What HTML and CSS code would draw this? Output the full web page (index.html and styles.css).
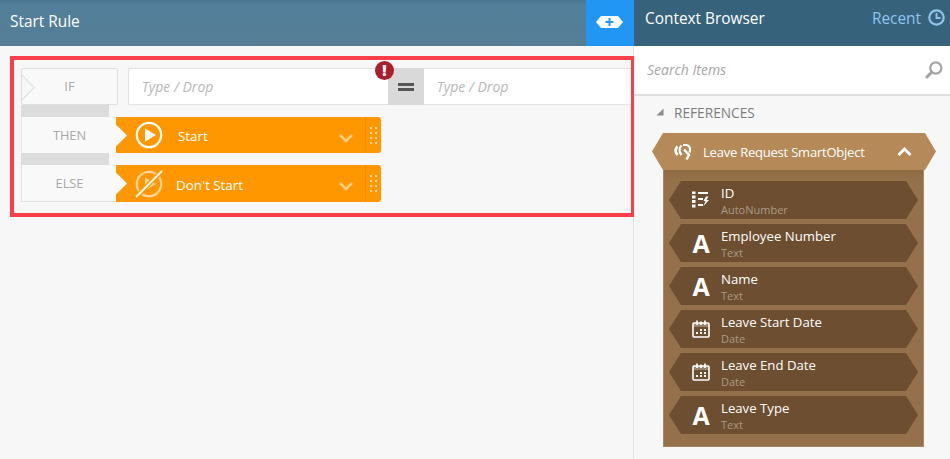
FILE: index.html
```html
<!DOCTYPE html>
<html lang="en">
<head>
<meta charset="utf-8">
<title>Start Rule</title>
<link rel="stylesheet" href="styles.css">
</head>
<body>
<div class="app">
  <main class="main">
    <header class="main-head">
      <h1 class="title">Start Rule</h1>
      <button class="add-btn" type="button" aria-label="Add">
        <svg width="27" height="12" viewBox="0 0 27 12"><path d="M5 0H22L27 6L22 12H5L0 6Z" fill="#fff"/><path d="M13.500 2V10M9.500 6H17.500" stroke="#2196f3" stroke-width="2"/></svg>
      </button>
    </header>
    <section class="canvas">
      <div class="rule-box">
        <div class="row if-row">
          <div class="label label-if">IF</div>
          <div class="expr">
            <div class="field field-left">Type / Drop</div>
            <div class="equals"><span class="equals-bars"></span></div>
            <div class="field field-right">Type / Drop</div>
            <span class="error-badge">!</span>
          </div>
        </div>
        <div class="connector"></div>
        <div class="row then-row">
          <div class="label label-then">THEN</div>
          <div class="action">
            <svg class="action-icon" width="28" height="28" viewBox="0 0 28 28"><circle cx="14" cy="14" r="12.200" fill="none" stroke="#fff" stroke-width="2.200"/><path d="M10 7.500L21 14L10 20.500Z" fill="#fff"/></svg>
            <span class="action-text action-start">Start</span>
            <svg class="chevron" width="16" height="10" viewBox="0 0 16 10"><path d="M2 2L8 8L14 2" fill="none" stroke="#fff" stroke-opacity=".5" stroke-width="2.600"/></svg>
            <span class="grip"><svg width="7" height="17" viewBox="0 0 7 17"><g fill="#ffd9a0"><rect width="2" height="2"/><rect x="5" width="2" height="2"/><rect y="5" width="2" height="2"/><rect x="5" y="5" width="2" height="2"/><rect y="10" width="2" height="2"/><rect x="5" y="10" width="2" height="2"/><rect y="15" width="2" height="2"/><rect x="5" y="15" width="2" height="2"/></g></svg></span>
          </div>
        </div>
        <div class="connector"></div>
        <div class="row else-row">
          <div class="label label-else">ELSE</div>
          <div class="action">
            <svg class="action-icon" width="28" height="28" viewBox="0 0 28 28"><g opacity=".6"><circle cx="14" cy="14" r="12.200" fill="none" stroke="#fff" stroke-width="2.200"/><path d="M10 7.500L21 14L10 20.500Z" fill="#fff"/></g><path d="M1 27L27 1" stroke="#ff9800" stroke-width="4.500"/><path d="M1 27L27 1" stroke="#fff" stroke-width="1.800"/></svg>
            <span class="action-text action-stop">Don't Start</span>
            <svg class="chevron" width="16" height="10" viewBox="0 0 16 10"><path d="M2 2L8 8L14 2" fill="none" stroke="#fff" stroke-opacity=".5" stroke-width="2.600"/></svg>
            <span class="grip"><svg width="7" height="17" viewBox="0 0 7 17"><g fill="#ffd9a0"><rect width="2" height="2"/><rect x="5" width="2" height="2"/><rect y="5" width="2" height="2"/><rect x="5" y="5" width="2" height="2"/><rect y="10" width="2" height="2"/><rect x="5" y="10" width="2" height="2"/><rect y="15" width="2" height="2"/><rect x="5" y="15" width="2" height="2"/></g></svg></span>
          </div>
        </div>
      </div>
    </section>
  </main>
  <aside class="side">
    <header class="side-head">
      <h2 class="side-title">Context Browser</h2>
      <div class="recent">
        <span class="recent-text">Recent</span>
        <svg width="17" height="17" viewBox="0 0 17 17"><circle cx="8.500" cy="8.500" r="7.200" fill="none" stroke="#8fc4ec" stroke-width="2.200"/><path d="M8.500 4V9H12.500" fill="none" stroke="#8fc4ec" stroke-width="1.800"/></svg>
      </div>
    </header>
    <div class="search">
      <span class="search-text">Search Items</span>
      <svg width="18" height="18" viewBox="0 0 18 18"><circle cx="10.800" cy="7" r="5.600" fill="none" stroke="#a3a3a3" stroke-width="2.200"/><path d="M6.800 11L2 16" stroke="#a3a3a3" stroke-width="3" stroke-linecap="round"/></svg>
    </div>
    <div class="refs">
      <div class="refs-head">
        <svg width="8" height="8" viewBox="0 0 8 8"><path d="M7.500 .5V7.500H.5Z" fill="#8a8a8a"/></svg>
        <span>REFERENCES</span>
      </div>
      <div class="tree">
        <div class="tree-head">
          <svg class="tree-icon" width="19" height="18" viewBox="0 0 19 18"><g fill="none" stroke="#fff"><path d="M3.500 3.500C1 6 1 9 3.500 12" stroke-width="2.600"/><path d="M7.500 2.500C5 5 5 9 7.500 12" stroke-width="2.400"/><path d="M9 2H12.500C16 2.500 17 6.500 15.500 9.500" stroke-width="2.200"/><path d="M10 6.500L15 12L12.500 16.500" stroke-width="2.400"/></g></svg>
          <span class="tree-title">Leave Request SmartObject</span>
          <svg width="15" height="10" viewBox="0 0 15 10"><path d="M1.500 8L7.500 2L13.500 8" fill="none" stroke="#fff" stroke-width="2.800"/></svg>
        </div>
        <ul class="tree-body">
          <li class="item">
            <span class="item-icon"><svg width="18" height="20" viewBox="0 0 18 20"><g fill="#fff"><rect x="0" y="1.500" width="3.500" height="2.500"/><rect x="0" y="5.500" width="3.500" height="3"/><rect x="0" y="10" width="3.500" height="3"/><rect x="0" y="14.500" width="3.500" height="3"/><rect x="6" y="2" width="10" height="2"/><rect x="6" y="8" width="5" height="2"/><rect x="6" y="14" width="5" height="2"/><path d="M14 6.500L11.500 11H13.500L11.500 16L17 10H14.500L16.500 6.500Z"/></g></svg></span>
            <span class="item-text"><span class="item-name">ID</span><span class="item-type">AutoNumber</span></span>
          </li>
          <li class="item">
            <span class="item-icon glyph">A</span>
            <span class="item-text"><span class="item-name">Employee Number</span><span class="item-type">Text</span></span>
          </li>
          <li class="item">
            <span class="item-icon glyph">A</span>
            <span class="item-text"><span class="item-name">Name</span><span class="item-type">Text</span></span>
          </li>
          <li class="item">
            <span class="item-icon"><svg width="18" height="18" viewBox="0 0 18 18"><rect x="1" y="3" width="16" height="14" rx="1" fill="none" stroke="#fff" stroke-width="1.600"/><path d="M1 3H17V7H1Z" fill="#fff" opacity=".3"/><path d="M5 .5V5M9 1.500V5M13 .5V5" stroke="#fff" stroke-width="1.700"/><g fill="#fff"><rect x="4" y="12" width="2" height="2"/><rect x="8" y="9" width="2" height="2"/><rect x="8" y="12" width="2" height="2"/><rect x="12" y="9" width="2" height="2"/><rect x="12" y="12" width="2" height="2"/></g></svg></span>
            <span class="item-text"><span class="item-name">Leave Start Date</span><span class="item-type">Date</span></span>
          </li>
          <li class="item">
            <span class="item-icon"><svg width="18" height="18" viewBox="0 0 18 18"><rect x="1" y="3" width="16" height="14" rx="1" fill="none" stroke="#fff" stroke-width="1.600"/><path d="M1 3H17V7H1Z" fill="#fff" opacity=".3"/><path d="M5 .5V5M9 1.500V5M13 .5V5" stroke="#fff" stroke-width="1.700"/><g fill="#fff"><rect x="4" y="12" width="2" height="2"/><rect x="8" y="9" width="2" height="2"/><rect x="8" y="12" width="2" height="2"/><rect x="12" y="9" width="2" height="2"/><rect x="12" y="12" width="2" height="2"/></g></svg></span>
            <span class="item-text"><span class="item-name">Leave End Date</span><span class="item-type">Date</span></span>
          </li>
          <li class="item">
            <span class="item-icon glyph">A</span>
            <span class="item-text"><span class="item-name">Leave Type</span><span class="item-type">Text</span></span>
          </li>
        </ul>
      </div>
    </div>
  </aside>
</div>
</body>
</html>
```
FILE: styles.css
```css
* { box-sizing: border-box; }
html, body { margin: 0; height: 100%; }
body { font-family: "Open Sans", "Liberation Sans", sans-serif; background: #f7f7f7; overflow: hidden; }
.app { display: flex; width: 950px; height: 459px; }

.main { width: 634px; display: flex; flex-direction: column; border-right: 1px solid #e2e2e2; }
.main-head { height: 46px; margin-right: -1px; display: flex; justify-content: space-between; background: linear-gradient(#4a7690, #537f9a 12%, #557e96); }
.title { margin: 0; padding: 12px 0 0 10px; font-size: 15.4px; line-height: 20px; font-weight: 400; color: #fff; }
.add-btn { width: 48px; height: 46px; padding: 0 1px 2px 0; border: 0; background: #2196f3; display: flex; align-items: center; justify-content: center; }

.canvas { flex: 1; padding: 10px 0 0 10px; }
.rule-box { width: 624px; height: 161px; border: 4px solid #fb3f4a; border-right-width: 3px; padding: 8px 0 0 7px; display: flex; flex-direction: column; }
.row { display: flex; }
.if-row { height: 37px; }
.then-row { height: 36px; }
.else-row { height: 37px; }
.connector { width: 88px; height: 12px; background: #dcdcdc; }

.label { width: 96px; display: flex; align-items: center; justify-content: center; font-size: 12.800px; color: #a8a8a8; background: #f9f9f9; }
.label-if { width: 97px; padding-bottom: 2px; border: 1px solid #dfdfdf; border-radius: 2px; position: relative; overflow: hidden; }
.label-if::before { content: ""; position: absolute; left: -10px; top: 9px; width: 17px; height: 17px; transform: rotate(45deg); background: #f7f7f7; border: 1px solid #dfdfdf; }
.label-then { padding-bottom: 1px; border-left: 1px solid #e6e6e6; }
.label-else { padding-bottom: 1px; border-left: 1px solid #e0e0e0; border-bottom: 1px solid #dfdfdf; }

.expr { width: 504px; margin-left: 10px; display: flex; position: relative; }
.field { display: flex; align-items: center; font-size: 14px; font-style: italic; color: #b8b8b8; background: #fff; border-top: 1px solid #e2e2e2; border-bottom: 1px solid #e2e2e2; padding-left: 13px; }
.field-left { width: 260px; border-left: 1px solid #e2e2e2; border-radius: 2px 0 0 2px; }
.field-right { flex: 1; }
.equals { width: 36px; background: #d9d9d9; display: flex; align-items: center; justify-content: center; }
.equals-bars { width: 16px; height: 8px; border-top: 3px solid #555; border-bottom: 3px solid #555; }
.error-badge { position: absolute; left: 247px; top: -7px; width: 19px; height: 19px; border-radius: 50%; background: #ab1e2e; color: #fff; font-size: 15px; font-weight: 800; line-height: 19px; text-align: center; }

.action { position: relative; width: 265px; margin-left: -1px; display: flex; align-items: center; background: #ff9800; border-radius: 0 3px 3px 0; }
.action::before { content: ""; position: absolute; left: -7px; top: 10.500px; width: 15px; height: 15px; transform: rotate(45deg); background: #f9f9f9; }
.action-icon { margin-left: 19px; flex: none; }
.action-text { font-size: 13.400px; color: #fff; padding-top: 1px; }
.action-start { margin-left: 15px; }
.action-stop { margin-left: 13px; padding-top: 2px; }
.chevron { position: absolute; right: 27px; top: 16px; }
.grip { position: absolute; right: 0; top: 0; bottom: 0; width: 16px; border-left: 1px solid #f58a00; display: flex; align-items: center; justify-content: center; }

.side { width: 316px; display: flex; flex-direction: column; }
.side-head { height: 46px; display: flex; justify-content: space-between; background: #36627c; padding: 9px 5px 0 11px; }
.side-title { margin: 0; font-size: 15.4px; line-height: 20px; font-weight: 400; color: #fff; }
.recent { display: flex; gap: 7px; font-size: 15.4px; line-height: 18px; color: #8fc4ec; }
.recent-text { padding-top: 1px; }
.search { height: 50px; background: #fff; border-bottom: 2px solid #dfdfdf; display: flex; align-items: center; justify-content: space-between; padding: 0 7px 1px 13px; }
.search-text { font-size: 14px; font-style: italic; color: #a6a6a6; }
.refs { flex: 1; padding: 0 0 0 18px; }
.refs-head { height: 37px; padding: 0 0 5px 4px; display: flex; align-items: center; gap: 10px; font-size: 13.700px; color: #7d7d7d; }
.tree { width: 284px; }
.tree-head { height: 37px; display: flex; align-items: center; padding: 0 24px 0 22px; background: #b58a58; color: #fff; clip-path: polygon(11px 0, calc(100% - 11px) 0, 100% 50%, calc(100% - 11px) 100%, 11px 100%, 0 50%); }
.tree-title { flex: 1; margin-left: 10px; font-size: 13px; letter-spacing: -.22px; }
.tree-body { list-style: none; margin: 0 0 0 11px; width: 261px; height: 277px; padding: 11px 5px 0; display: flex; flex-direction: column; gap: 5px; background: #94714a; border: 1px solid #a98a64; border-top: 0; box-shadow: inset 0 8px 8px -6px #8a6740; }
.item { height: 38px; flex: none; display: flex; align-items: center; background: #6d4e30; color: #fff; clip-path: polygon(12px 0, calc(100% - 12px) 0, 100% 50%, calc(100% - 12px) 100%, 12px 100%, 0 50%); }
.item-icon { width: 18px; margin-left: 23px; flex: none; display: flex; align-items: center; justify-content: center; }
.glyph { font-size: 25px; line-height: 30px; font-weight: 700; }
.item-text { margin-left: 11px; padding-top: 2px; display: flex; flex-direction: column; }
.item-name { font-size: 13.200px; line-height: 17px; }
.item-type { font-size: 11px; line-height: 16px; color: #ab9a87; }
```
